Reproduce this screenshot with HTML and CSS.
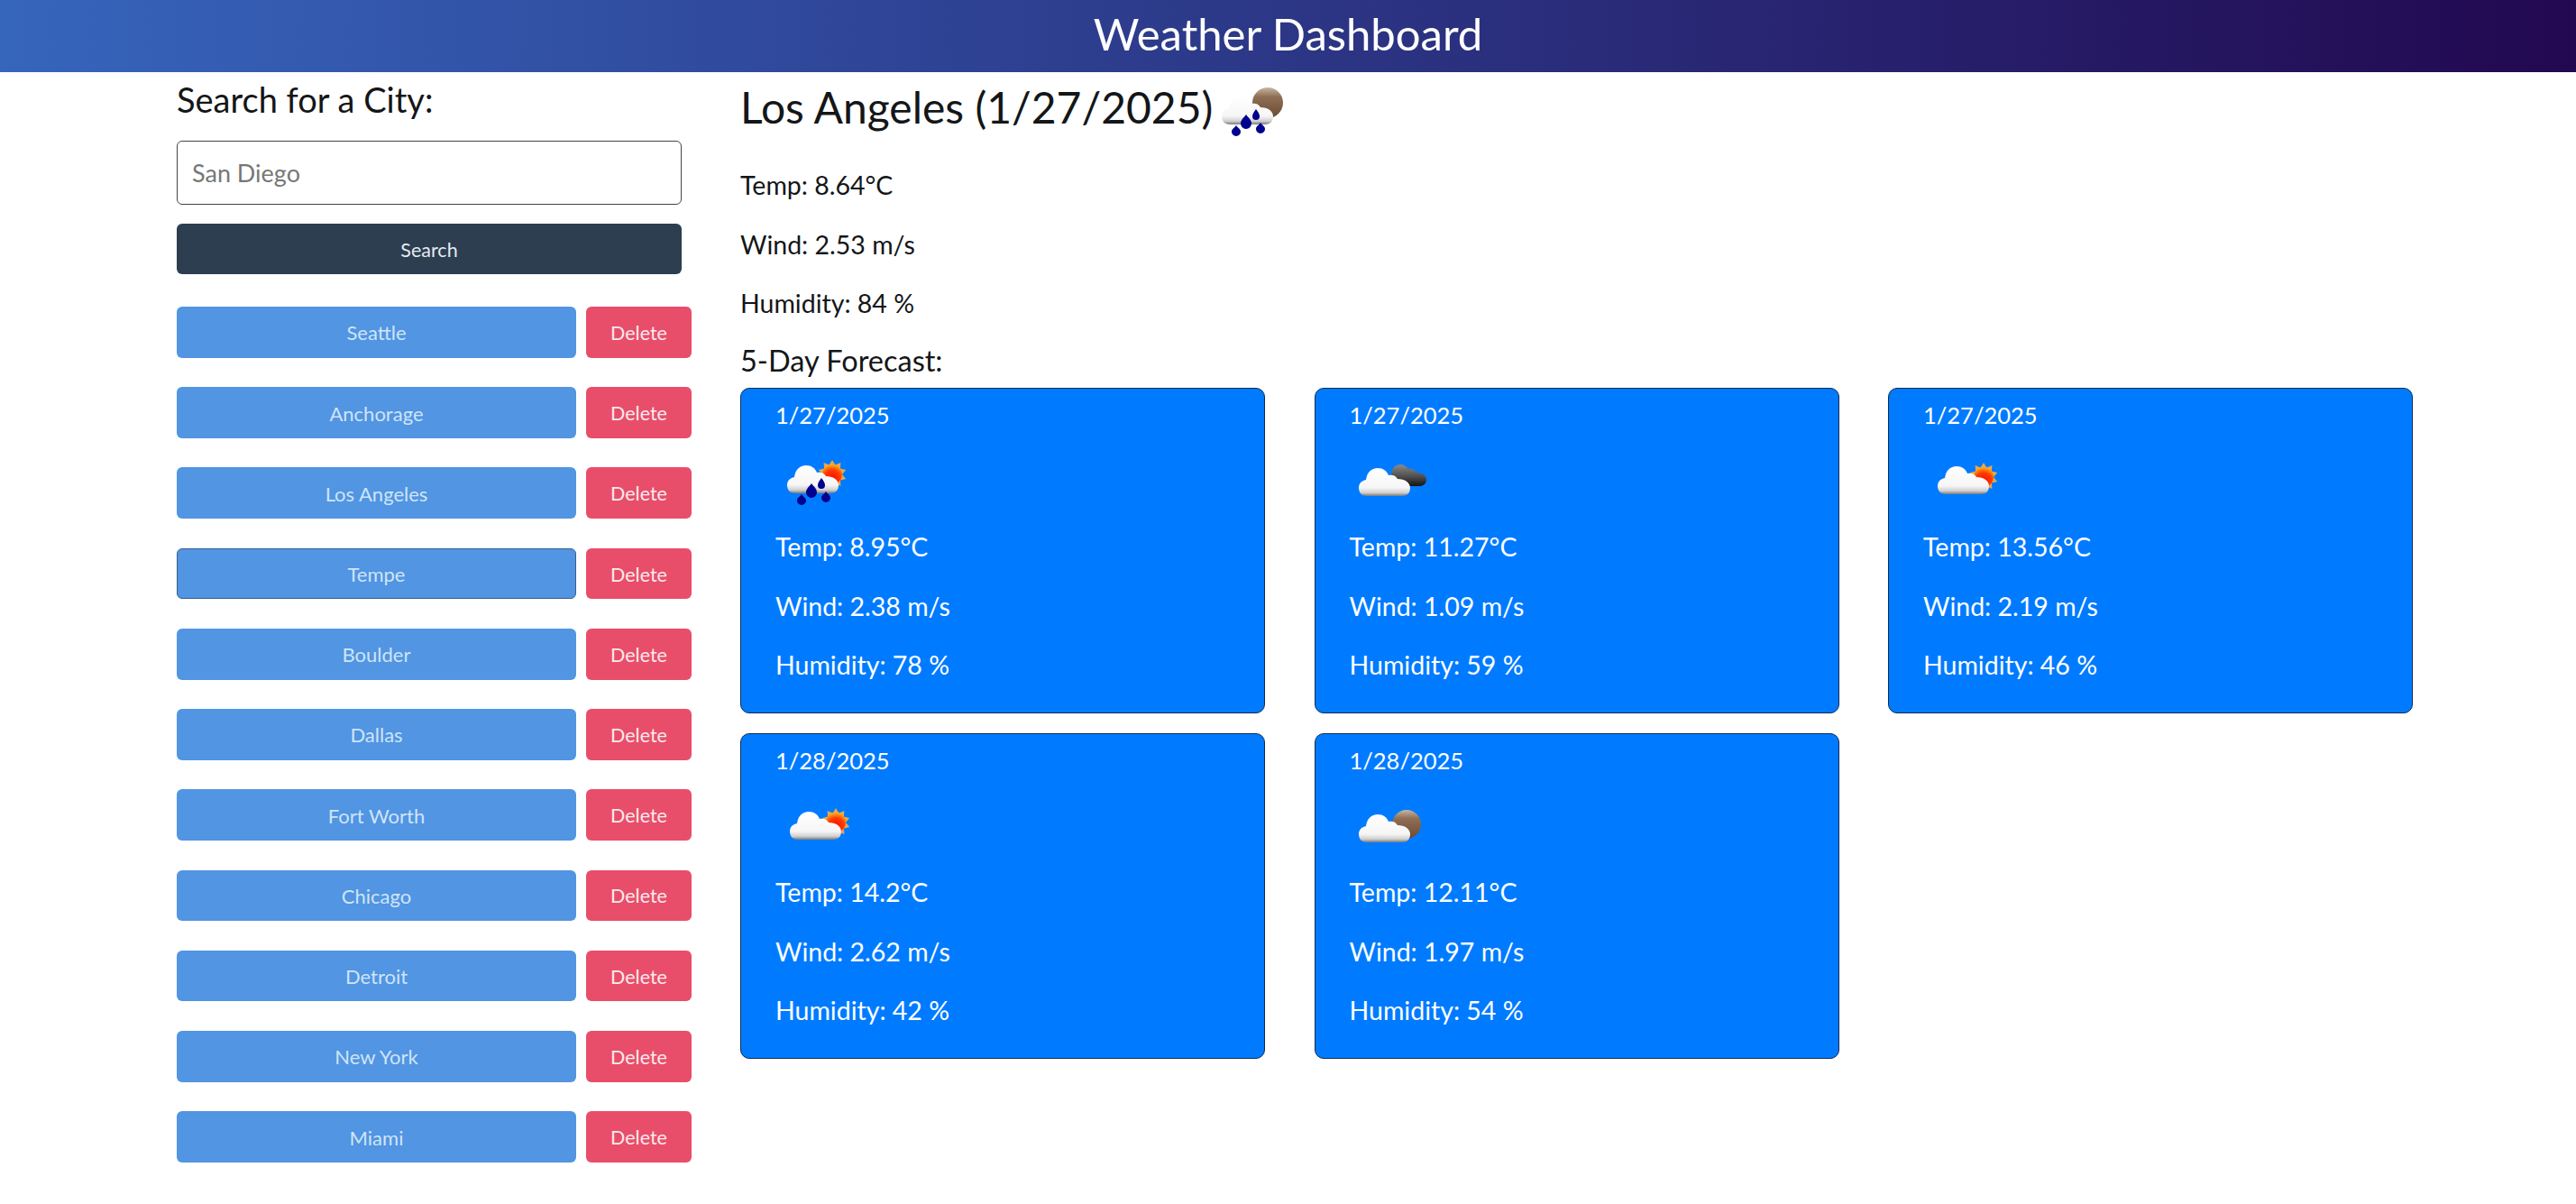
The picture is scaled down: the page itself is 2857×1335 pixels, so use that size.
FILE: index.html
```html
<!DOCTYPE html>
<html lang="en">
<head>
    <meta charset="UTF-8">
    <meta name="viewport" content="width=device-width, initial-scale=1.0">
    <title>Weather Dashboard</title>
    <link rel="stylesheet" href="styles.css">
</head>
<body>
    <svg class="icon-defs" width="0" height="0" aria-hidden="true">
        <defs>
            <linearGradient id="cloudFill" x1="0" y1="0" x2="0" y2="1">
                <stop offset="0" stop-color="#ffffff"/>
                <stop offset="0.7" stop-color="#f6f6f6"/>
                <stop offset="0.88" stop-color="#d0d0d0"/>
                <stop offset="1" stop-color="#7a7a7a"/>
            </linearGradient>
            <linearGradient id="darkFill" x1="0" y1="0" x2="0" y2="1">
                <stop offset="0" stop-color="#8a8a8a"/>
                <stop offset="0.6" stop-color="#4a4a4a"/>
                <stop offset="1" stop-color="#111111"/>
            </linearGradient>
            <linearGradient id="moonFill" x1="0" y1="0" x2="0" y2="1">
                <stop offset="0" stop-color="#c9b6a3"/>
                <stop offset="0.3" stop-color="#8f6f55"/>
                <stop offset="1" stop-color="#6b4a33"/>
            </linearGradient>
            <radialGradient id="sunFill" cx="0.5" cy="0.7" r="0.7">
                <stop offset="0" stop-color="#ff0a00"/>
                <stop offset="0.6" stop-color="#ff3a00"/>
                <stop offset="1" stop-color="#ffb020"/>
            </radialGradient>
            <filter id="soft" x="-10%" y="-10%" width="120%" height="120%">
                <feGaussianBlur stdDeviation="0.7"/>
            </filter>
            <symbol id="sun" viewBox="0 0 120 70">
                <polygon fill="#e8a84a" points="83,11 86.4,16.5 92.4,14.1 91.9,20.5 98.2,22.1 94,27 98.2,31.9 91.9,33.5 92.4,39.9 86.4,37.5 83,43 79.6,37.5 73.6,39.9 74.1,33.5 67.8,31.9 72,27 67.8,22.1 74.1,20.5 73.6,14.1 79.6,16.5"/>
                <circle cx="83" cy="27" r="11" fill="url(#sunFill)"/>
            </symbol>
            <symbol id="cloud" viewBox="0 0 120 70">
                <path fill="url(#cloudFill)" d="M42 48c-6 0-9-4-9-9 0-5 3-8 8-9 1-8 6-13 13-13 6 0 10 3 12 8 4-1 8 0 10 4 8 0 14 4 14 10 0 5-3 9-9 9z"/>
            </symbol>
            <symbol id="drops" viewBox="0 0 120 70">
                <path fill="#00008f" d="M71 31c2 3 4 5 4 8a4 4 0 0 1-8 0c0-3 2-5 4-8z"/>
                <path fill="#00008f" d="M60 37c3 4 6 6 6 10a6 6 0 0 1-12 0c0-4 3-6 6-10z"/>
                <path fill="#00008f" d="M49 49c2 3 5 4 5 7a5 5 0 0 1-10 0c0-3 3-4 5-7z"/>
                <path fill="#00008f" d="M76 46c2 3 5 4 5 7a5 5 0 0 1-10 0c0-3 3-4 5-7z"/>
            </symbol>
        </defs>
    </svg>

    <header class="top-bar">
        <h1>Weather Dashboard</h1>
    </header>

    <div class="page">
        <aside class="sidebar">
            <h2 class="search-title">Search for a City:</h2>
            <input class="city-input" type="text" placeholder="San Diego">
            <button class="search-btn">Search</button>
            <ul class="city-list">
                <li><button class="city-btn">Seattle</button><button class="delete-btn">Delete</button></li>
                <li><button class="city-btn">Anchorage</button><button class="delete-btn">Delete</button></li>
                <li><button class="city-btn">Los Angeles</button><button class="delete-btn">Delete</button></li>
                <li><button class="city-btn active">Tempe</button><button class="delete-btn">Delete</button></li>
                <li><button class="city-btn">Boulder</button><button class="delete-btn">Delete</button></li>
                <li><button class="city-btn">Dallas</button><button class="delete-btn">Delete</button></li>
                <li><button class="city-btn">Fort Worth</button><button class="delete-btn">Delete</button></li>
                <li><button class="city-btn">Chicago</button><button class="delete-btn">Delete</button></li>
                <li><button class="city-btn">Detroit</button><button class="delete-btn">Delete</button></li>
                <li><button class="city-btn">New York</button><button class="delete-btn">Delete</button></li>
                <li><button class="city-btn">Miami</button><button class="delete-btn">Delete</button></li>
            </ul>
        </aside>

        <main class="content">
            <h2 class="current-title">Los Angeles (1/27/2025)
                <svg class="wx-icon wx-title" viewBox="0 0 120 70" role="img" aria-label="light rain">
                    <g filter="url(#soft)">
                        <circle cx="84" cy="24" r="17" fill="url(#moonFill)"/>
                        <use href="#cloud"/>
                        <use href="#drops"/>
                    </g>
                </svg>
            </h2>
            <p class="stat">Temp: 8.64°C</p>
            <p class="stat">Wind: 2.53 m/s</p>
            <p class="stat">Humidity: 84 %</p>
            <h3 class="forecast-title">5-Day Forecast:</h3>

            <div class="forecast">
                <div class="card">
                    <div class="card-date">1/27/2025</div>
                    <svg class="wx-icon" viewBox="0 0 120 70" role="img" aria-label="light rain">
                        <g filter="url(#soft)"><use href="#sun"/><use href="#cloud"/><use href="#drops"/></g>
                    </svg>
                    <p>Temp: 8.95°C</p>
                    <p>Wind: 2.38 m/s</p>
                    <p>Humidity: 78 %</p>
                </div>
                <div class="card">
                    <div class="card-date">1/27/2025</div>
                    <svg class="wx-icon" viewBox="0 0 120 70" role="img" aria-label="few clouds">
                        <g filter="url(#soft)">
                            <path fill="url(#darkFill)" d="M66 28c0-7 4-12 10-12 4 0 7 2 9 5 5-1 8 1 9 4 6 0 11 3 11 8 0 4-3 7-8 7H75z"/>
                            <use href="#cloud" x="-3" y="3"/>
                        </g>
                    </svg>
                    <p>Temp: 11.27°C</p>
                    <p>Wind: 1.09 m/s</p>
                    <p>Humidity: 59 %</p>
                </div>
                <div class="card">
                    <div class="card-date">1/27/2025</div>
                    <svg class="wx-icon" viewBox="0 0 120 70" role="img" aria-label="few clouds">
                        <g filter="url(#soft)"><use href="#sun" x="4" y="3"/><use href="#cloud" x="3" y="1"/></g>
                    </svg>
                    <p>Temp: 13.56°C</p>
                    <p>Wind: 2.19 m/s</p>
                    <p>Humidity: 46 %</p>
                </div>
                <div class="card">
                    <div class="card-date">1/28/2025</div>
                    <svg class="wx-icon" viewBox="0 0 120 70" role="img" aria-label="few clouds">
                        <g filter="url(#soft)"><use href="#sun" x="4" y="3"/><use href="#cloud" x="3" y="1"/></g>
                    </svg>
                    <p>Temp: 14.2°C</p>
                    <p>Wind: 2.62 m/s</p>
                    <p>Humidity: 42 %</p>
                </div>
                <div class="card">
                    <div class="card-date">1/28/2025</div>
                    <svg class="wx-icon" viewBox="0 0 120 70" role="img" aria-label="few clouds at night">
                        <g filter="url(#soft)">
                            <circle cx="83" cy="32" r="16" fill="url(#moonFill)"/>
                            <use href="#cloud" x="-3" y="4"/>
                        </g>
                    </svg>
                    <p>Temp: 12.11°C</p>
                    <p>Wind: 1.97 m/s</p>
                    <p>Humidity: 54 %</p>
                </div>
            </div>
        </main>
    </div>
</body>
</html>
```

FILE: styles.css
```css
* {
    box-sizing: border-box;
}
body {
    margin: 0;
    font-family: "Lato", "Noto Sans", sans-serif;
    color: #141618;
    background: #fff;
}
.icon-defs {
    position: absolute;
}
.top-bar {
    height: 80px;
    display: flex;
    align-items: center;
    justify-content: center;
    color: #fff;
    background: linear-gradient(to right, #3665bc, #220850);
}
.top-bar h1 {
    margin: 0 0 7px;
    font-size: 49px;
    font-weight: 400;
}
.page {
    display: flex;
    padding-left: 196px;
}
.sidebar {
    width: 625px;
    flex: none;
}
.search-title {
    margin: 7px 0 0;
    height: 69px;
    line-height: 46px;
    font-size: 38px;
    font-weight: 400;
}
.city-input {
    display: block;
    width: 560px;
    height: 71px;
    padding: 0 16px;
    font: inherit;
    font-size: 27px;
    border: 1px solid #444;
    border-radius: 6px;
}
.city-input::placeholder {
    color: #777;
}
.search-btn {
    display: block;
    width: 560px;
    height: 56px;
    margin-top: 21px;
    padding-top: 2px;
    font: inherit;
    font-size: 21.5px;
    color: #e3ebf0;
    background: #2c3e50;
    border: 0;
    border-radius: 6px;
}
.city-list {
    list-style: none;
    margin: 36px 0 0;
    padding: 0;
}
.city-list li {
    display: flex;
    gap: 11px;
    margin-bottom: 32.65px;
}
.city-btn, .delete-btn {
    height: 56.6px;
    padding-top: 2px;
    font: inherit;
    border: 0;
    border-radius: 6px;
}
.city-btn {
    width: 443px;
    font-size: 22px;
    color: #cfe4f7;
    background: #5195e3;
}
.city-btn.active {
    border: 1px solid #35608f;
}
.delete-btn {
    width: 117px;
    font-size: 21.5px;
    color: #fbe9ec;
    background: #e84e6a;
}
.content {
    flex: 1;
}
.current-title {
    display: flex;
    align-items: center;
    gap: 10px;
    margin: -2px 0 0;
    height: 80px;
    font-size: 48px;
    font-weight: 400;
}
.wx-title {
    width: 120px;
    height: 70px;
    margin: 13px 0 0 -33px;
}
.stat {
    margin: 0;
    height: 65.5px;
    line-height: 65.5px;
    font-size: 28.5px;
}
.content .stat:first-of-type {
    margin-top: 15px;
}
.forecast-title {
    margin: 0;
    height: 60px;
    line-height: 60px;
    font-size: 32.5px;
    font-weight: 400;
}
.forecast {
    display: grid;
    grid-template-columns: repeat(3, 582px);
    grid-auto-rows: 361px;
    gap: 22px 54.5px;
}
.card {
    padding: 11px 38px;
    color: #fff;
    background: #007bff;
    border: 1px solid #0b2a55;
    border-radius: 10px;
}
.card-date {
    height: 36px;
    line-height: 36px;
    font-size: 25.5px;
}
.card .wx-icon {
    display: block;
    width: 120px;
    height: 70px;
    margin: 21px 0 5.5px -20px;
}
.card p {
    margin: 0;
    height: 65.6px;
    line-height: 65.6px;
    font-size: 28.5px;
}
```
